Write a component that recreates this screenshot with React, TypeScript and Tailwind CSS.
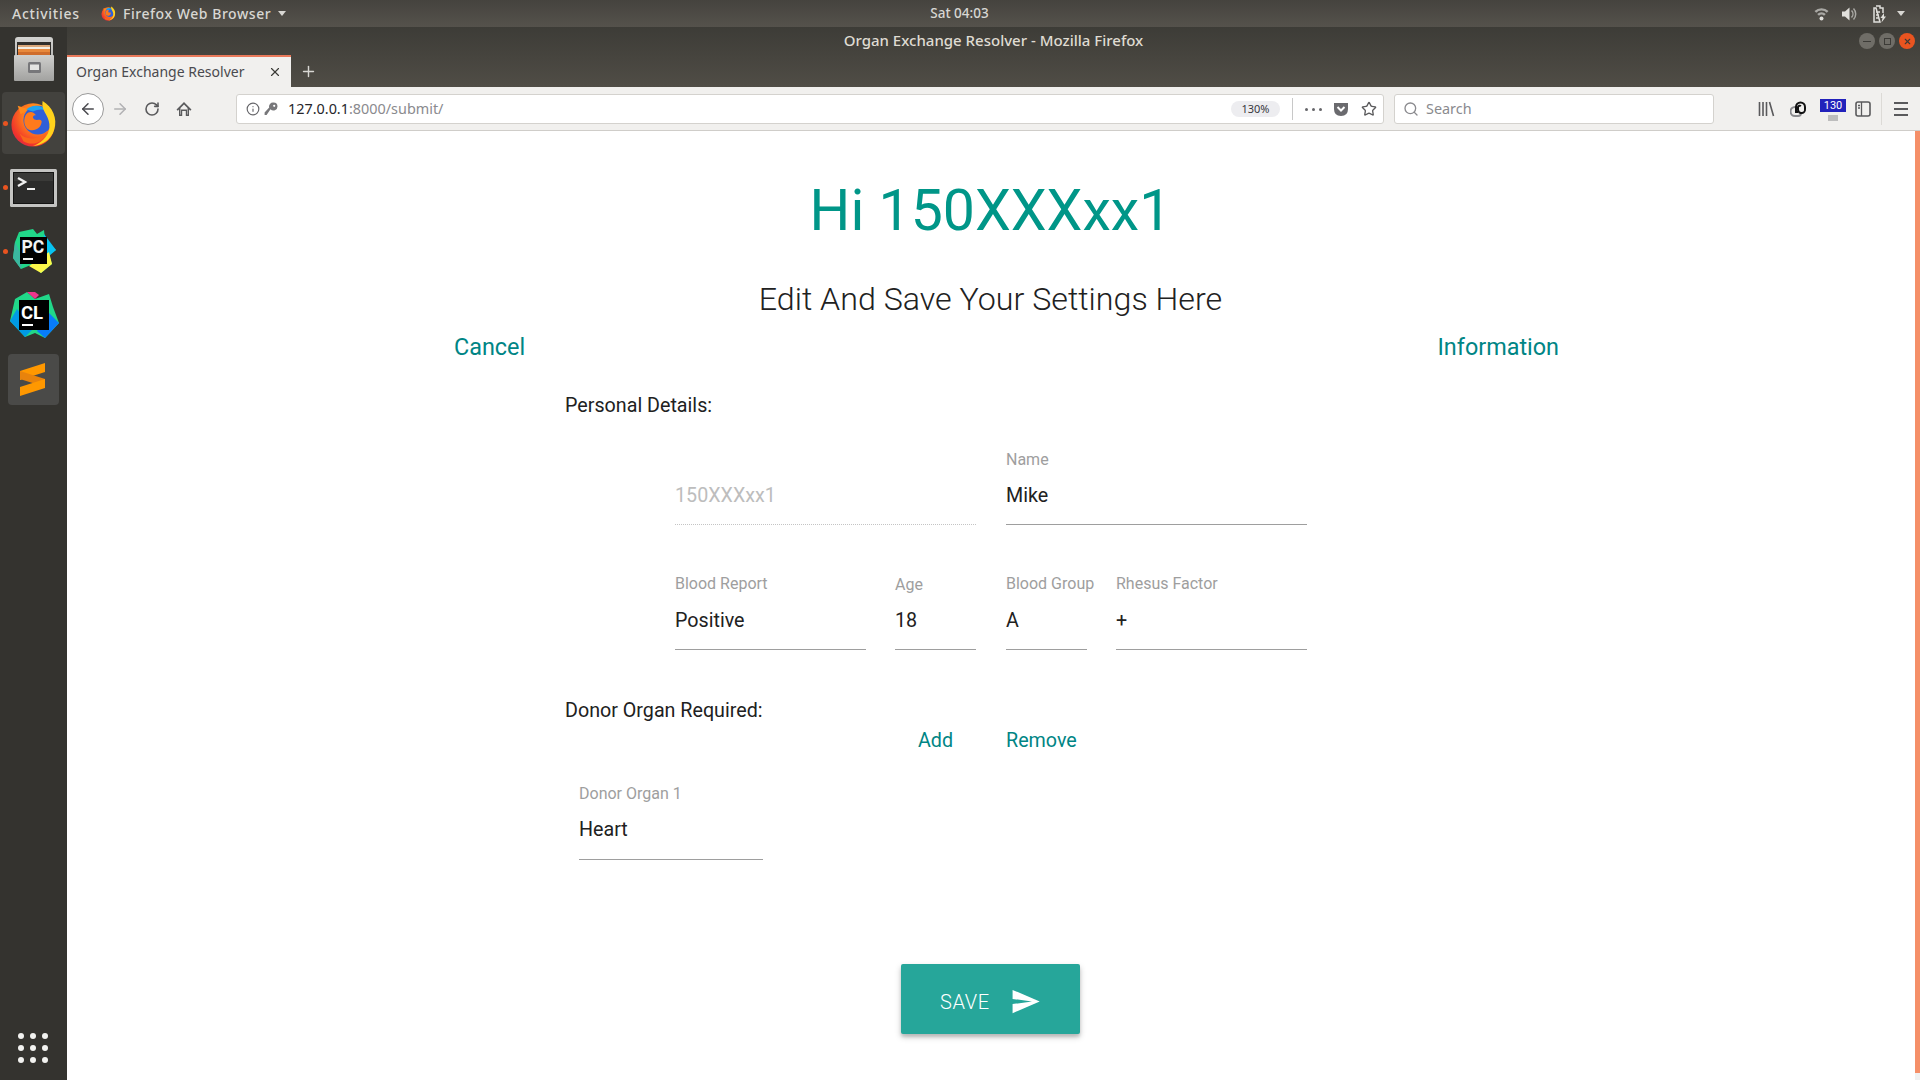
import React from "react";
import { ArrowLeft, ArrowRight, RotateCw, Info, Star, Search, X, Plus } from "lucide-react";

function Firefox({ size }: { size: number }) {
  const id = "ff" + size;
  return (
    <svg width={size} height={size} viewBox="0 0 50 50">
      <defs>
        <radialGradient id={id} cx="0.65" cy="0.3" r="0.85">
          <stop offset="0" stopColor="#ffb81c" />
          <stop offset="0.45" stopColor="#ff7a1c" />
          <stop offset="0.8" stopColor="#f0342c" />
          <stop offset="1" stopColor="#d6205a" />
        </radialGradient>
      </defs>
      <circle cx="24" cy="27" r="22.5" fill={`url(#${id})`} />
      <path d="M8 7 L11 16 L20 11 Z" fill="#ff8a1c" />
      <circle cx="29" cy="22" r="15" fill="#2f5fd8" />
      <path d="M17 11 C25 4 35 7 42 15 C37 10 30 10 24 13 Z" fill="#1fa4f0" />
      <path d="M17 16 C20 12 25 13 27 17 C24 17 23 19 25 21 C29 23 31 20 33 23 C33 31 24 35 18 31 C14 27 14 20 17 16 Z" fill="#ff7a1c" />
      <path d="M34 2 C44 8 50 20 46 32 C43 42 34 48 24 49 C36 44 42 36 41 26 C40 16 32 12 34 2 Z" fill="#ffd21c" />
      <path d="M10 36 C18 44 30 42 38 34 C36 44 24 50 14 44 Z" fill="#f9671c" />
    </svg>
  );
}

function Cabinet() {
  return (
    <svg width="42" height="44" viewBox="0 0 42 44">
      <defs>
        <linearGradient id="cabTop" x1="0" y1="0" x2="0" y2="1">
          <stop offset="0" stopColor="#d2d2d0" />
          <stop offset="1" stopColor="#9a9a98" />
        </linearGradient>
        <linearGradient id="cabFront" x1="0" y1="0" x2="0" y2="1">
          <stop offset="0" stopColor="#cfcfcd" />
          <stop offset="1" stopColor="#a2a2a0" />
        </linearGradient>
      </defs>
      <path d="M2 3 Q2 0 5 0 H37 Q40 0 40 3 V42 Q40 44 38 44 H4 Q2 44 2 42 Z" fill="url(#cabTop)" />
      <rect x="4" y="5" width="34" height="14" fill="#302e2b" />
      <rect x="5" y="8" width="32" height="2" fill="#d9a77a" />
      <rect x="5" y="10" width="32" height="2" fill="#f3ede2" />
      <rect x="5" y="12" width="32" height="3" fill="#e8893c" />
      <rect x="5" y="15" width="32" height="3" fill="#cf6d2c" />
      <rect x="1" y="18" width="40" height="26" rx="1" fill="url(#cabFront)" />
      <rect x="15" y="25" width="13" height="11" rx="1.5" fill="#77777a" />
      <rect x="17" y="27.5" width="9" height="5.5" fill="#e4e4e2" />
    </svg>
  );
}

function Terminal() {
  return (
    <svg className="mt-[2px]" width="47" height="38" viewBox="0 0 47 38">
      <rect x="0" y="0" width="47" height="38" rx="1.5" fill="#c4c4c2" />
      <rect x="3" y="3" width="41" height="32" fill="#141413" />
      <rect x="4" y="4" width="39" height="30" fill="#2c2c2b" />
      <rect x="4" y="4" width="39" height="8" fill="#3a3a38" />
      <path d="M8 9 L15 13 L8 17" fill="none" stroke="#f0f0f0" strokeWidth="2.4" />
      <rect x="17" y="19" width="8" height="2" fill="#f0f0f0" />
    </svg>
  );
}

function PyCharm() {
  return (
    <svg width="46" height="46" viewBox="0 0 46 46">
      <polygon points="8,4 22,1 26,6 33,2 34,12 45,22 38,27 41,36 30,45 20,37 10,41 2,30 4,14" fill="#21d789" />
      <polygon points="33,6 45,22 38,28 32,24" fill="#07c3f2" />
      <polygon points="38,24 41,36 30,45 18,38 30,30" fill="#fcf84a" />
      <polygon points="4,14 12,30 10,41 2,30" fill="#3bb8a0" />
      <rect x="9" y="9" width="27" height="27" fill="#000" />
      <text x="10.5" y="25" fontFamily="Roboto, sans-serif" fontWeight="700" fontSize="17.5" fill="#f2f2f2">PC</text>
      <rect x="12" y="30" width="10" height="2" fill="#f2f2f2" />
    </svg>
  );
}

function CLion() {
  return (
    <svg width="50" height="48" viewBox="0 0 50 48">
      <polygon points="6,8 18,1 26,8 40,3 44,16 50,32 36,47 26,42 16,46 1,30" fill="#21d789" />
      <polygon points="18,1 26,8 30,4 26,1" fill="#ed358c" />
      <polygon points="1,30 16,46 24,38 8,18" fill="#009ae5" />
      <polygon points="40,22 50,32 36,47 28,40" fill="#087cfa" />
      <rect x="10" y="9" width="30" height="30" fill="#000" />
      <text x="12" y="28" fontFamily="Roboto, sans-serif" fontWeight="700" fontSize="18.5" fill="#fff">CL</text>
      <rect x="13" y="33" width="11" height="2" fill="#fff" />
    </svg>
  );
}

function Sublime() {
  return (
    <svg width="51" height="51" viewBox="0 0 51 51">
      <rect width="51" height="51" rx="4" fill="#4a4a48" />
      <polygon points="12,17 37,9 37,18 12,26" fill="#ff9800" />
      <polygon points="12,25 37,33 37,25 12,17" fill="#e8830c" />
      <polygon points="12,33 37,25 37,34 12,42" fill="#ff9800" />
    </svg>
  );
}

function Dock({ children, dot, tile }: { children: React.ReactNode; dot?: boolean; tile?: boolean }) {
  return (
    <div className="relative flex h-[64px] w-full items-center justify-center">
      {tile && <div className="absolute left-[2px] top-[1px] h-[62px] w-[63px] rounded-[4px] bg-[#43423e]" />}
      {dot && <div className="absolute left-[3px] top-[30px] h-[5px] w-[5px] rounded-full bg-[#e95420]" />}
      <div className="relative flex">{children}</div>
    </div>
  );
}

function Field({ label, value, width, muted, size, labelClass }: { label?: string; value: string; width: string; muted?: boolean; size: string; labelClass?: string }) {
  return (
    <div className={width}>
      <div className={`h-[20px] whitespace-nowrap text-[16px] leading-[20px] text-[#9e9e9e] ${labelClass ?? ""}`}>{label}</div>
      <div
        className={`flex items-center border-b text-[19.7px] ${size} ${
          muted ? "border-dotted border-[#c4c4c4] text-[#bdbdbd]" : "border-[#9e9e9e] text-[#212121]"
        }`}
      >
        {value}
      </div>
    </div>
  );
}

export default function App() {
  return (
    <div className="flex h-[1080px] w-[1920px] flex-col overflow-hidden bg-white font-['Roboto',sans-serif]">
      {/* GNOME top bar */}
      <div className="grid h-[27px] shrink-0 grid-cols-3 items-center bg-gradient-to-b from-[#45433e] to-[#55524c] font-['Noto_Sans',sans-serif] text-[14px] font-medium text-[#d8d7d3]">
        <div className="flex items-center pl-[12px] tracking-[0.55px]">
          <span className="w-[89px] tracking-[0.75px]">Activities</span>
          <Firefox size={15} />
          <span className="ml-[7px]">Firefox Web Browser</span>
          <span className="ml-[7px] h-0 w-0 border-x-[4px] border-t-[5px] border-x-transparent border-t-[#d8d7d3]" />
        </div>
        <div className="pr-[1px] text-center text-[13.5px]">Sat 04:03</div>
        <div className="flex items-center justify-end pr-[15px]">
          <svg width="15" height="15" viewBox="0 0 15 15">
            <path d="M0.5 5 A10 10 0 0 1 14.5 5 L12.8 6.8 A7.5 7.5 0 0 0 2.2 6.8 Z" fill="#a9a8a4" />
            <path d="M3.2 8 A6 6 0 0 1 11.8 8 L10 9.8 A3.5 3.5 0 0 0 5 9.8 Z" fill="#a9a8a4" />
            <circle cx="7.5" cy="12.5" r="2" fill="#e0dfdb" />
          </svg>
          <svg className="ml-[12px]" width="16" height="16" viewBox="0 0 16 16">
            <path d="M1 5.5 H4 L8.5 1.5 V14.5 L4 10.5 H1 Z" fill="#e0dfdb" />
            <path d="M10.5 4.5 A5 5 0 0 1 10.5 11.5 M12.5 2.5 A8 8 0 0 1 12.5 13.5" fill="none" stroke="#a9a8a4" strokeWidth="1.5" />
          </svg>
          <svg className="ml-[15px]" width="15" height="18" viewBox="0 0 15 18">
            <path d="M4 1 H8 V3 H11 V8 M8 17 H2 V3 H4 Z M4 7 H8 M4 10 H7 M4 13 H7" fill="none" stroke="#e0dfdb" strokeWidth="1.5" />
            <path d="M12 8 L8.5 13 H10.5 L9.5 17.5 L14 11.5 H12 Z" fill="#e0dfdb" />
          </svg>
          <span className="ml-[10px] h-0 w-0 border-x-[4px] border-t-[5px] border-x-transparent border-t-[#d8d7d3]" />
        </div>
      </div>

      <div className="flex min-h-0 flex-1">
        {/* Dock */}
        <div className="flex w-[67px] shrink-0 flex-col items-center bg-[#34332f] pb-[17px]">
          <Dock><Cabinet /></Dock>
          <Dock tile dot><Firefox size={48} /></Dock>
          <Dock dot><Terminal /></Dock>
          <Dock dot><PyCharm /></Dock>
          <Dock><CLion /></Dock>
          <Dock><Sublime /></Dock>
          <div className="mr-[1px] mt-auto grid grid-cols-3 gap-[6px]">
            {Array.from({ length: 9 }).map((_, i) => (
              <div key={i} className="h-[6px] w-[6px] rounded-full bg-[#f2f2f0]" />
            ))}
          </div>
        </div>

        <div className="flex min-w-0 flex-1 flex-col">
          {/* Title bar with tab strip */}
          <div className="relative h-[60px] shrink-0 bg-gradient-to-b from-[#3d3c37] to-[#504d46]">
            <div className="flex h-[27px] items-center justify-center font-['Noto_Sans',sans-serif] text-[15px] font-medium text-[#dfdbd2]">
              Organ Exchange Resolver - Mozilla Firefox
            </div>
            <div className="absolute right-[5px] top-[6px] flex gap-[4px]">
              <div className="flex h-[16px] w-[16px] items-center justify-center rounded-full bg-[#6f6d67]"><div className="h-[1px] w-[8px] bg-[#3c3b37]" /></div>
              <div className="flex h-[16px] w-[16px] items-center justify-center rounded-full bg-[#6f6d67]"><div className="h-[7px] w-[7px] border border-[#3c3b37]" /></div>
              <div className="flex h-[16px] w-[16px] items-center justify-center rounded-full bg-[#e95420]"><X size={9} strokeWidth={3} className="text-[#3c3b37]" /></div>
            </div>
            <div className="absolute bottom-0 left-0 flex h-[32px] items-stretch">
              <div className="flex w-[224px] items-center border-t-2 border-[#e9795a] bg-[#f1f0ee] pb-[1px] pl-[9px] font-['Noto_Sans',sans-serif] text-[14px] text-[#4a4a4f]">
                <span className="w-[192px]">Organ Exchange Resolver</span>
                <X size={14} strokeWidth={2} className="text-[#3c3b37]" />
              </div>
              <div className="flex w-[34px] items-center justify-center">
                <Plus size={17} strokeWidth={2} className="text-[#d8d7d3]" />
              </div>
            </div>
          </div>

          {/* Toolbar */}
          <div className="flex h-[44px] shrink-0 items-center border-b border-[#cfcdc9] bg-[#f1f0ee] pt-[1px] text-[#5a5a5c]">
            <div className="ml-[5px] flex h-[32px] w-[32px] items-center justify-center rounded-full border border-[#9a9a9a] bg-white">
              <ArrowLeft size={18} strokeWidth={2} className="text-[#4a4a4f]" />
            </div>
            <div className="flex w-[32px] justify-center"><ArrowRight size={18} strokeWidth={2} className="text-[#b1b1b3]" /></div>
            <div className="flex w-[32px] justify-center"><RotateCw size={16} strokeWidth={2.4} /></div>
            <div className="flex w-[32px] justify-center">
              <svg width="16" height="16" viewBox="0 0 16 16">
                <path d="M8 1 L15.5 8.5 L14.2 9.8 L13 8.6 V15 H9.8 V10 H6.2 V15 H3 V8.6 L1.8 9.8 L0.5 8.5 Z" fill="#5a5a5c" />
                <path d="M8 3.6 L11.5 7.1 V13.6 H11 V8.6 H5 V13.6 H4.5 V7.1 Z" fill="#f1f0ee" />
              </svg>
            </div>
            <div className="ml-[36px] flex h-[30px] w-[1148px] items-center rounded-[3px] border border-[#d4d2ce] bg-white pl-[9px] pr-[6px] font-['Noto_Sans',sans-serif] text-[14.4px]">
              <Info size={14} strokeWidth={2} className="text-[#66666a]" />
              <svg className="ml-[4px]" width="14" height="14" viewBox="0 0 14 14">
                <path d="M13.5 4.5 A4 4 0 0 1 6.5 7.2 L2.6 13 H0.6 V10.6 L5.2 5.6 A4 4 0 0 1 9.5 0.5 A4 4 0 0 1 13.5 4.5 Z" fill="#77777a" />
                <circle cx="10.2" cy="3.8" r="1.1" fill="#ffffff" />
              </svg>
              <span className="ml-[10px] text-[#26262a]">127.0.0.1</span>
              <span className="text-[#8a8a8e]">:8000/submit/</span>
              <div className="ml-auto flex h-[16px] w-[49px] items-center justify-center rounded-full bg-[#ededf0] text-[11px] text-[#38383d]">130%</div>
              <div className="ml-[12px] h-[22px] w-px bg-[#c8c8c8]" />
              <div className="ml-[12px] flex w-[17px] justify-between">
                <span className="h-[3px] w-[3px] rounded-full bg-[#66666a]" />
                <span className="h-[3px] w-[3px] rounded-full bg-[#66666a]" />
                <span className="h-[3px] w-[3px] rounded-full bg-[#66666a]" />
              </div>
              <svg className="ml-[11px]" width="16" height="16" viewBox="0 0 16 16">
                <path d="M1 2 H15 V8 Q15 15 8 15 Q1 15 1 8 Z" fill="#6a6a6e" />
                <path d="M4.5 6 L8 9.5 L11.5 6" fill="none" stroke="#fff" strokeWidth="2" />
              </svg>
              <Star size={16} strokeWidth={2} className="ml-[12px]" />
            </div>
            <div className="ml-[10px] flex h-[30px] w-[320px] items-center rounded-[3px] border border-[#d4d2ce] bg-white pl-[8px] font-['Noto_Sans',sans-serif] text-[14.4px] text-[#8a8a8e]">
              <Search size={16} strokeWidth={2} className="text-[#8a8a8e]" />
              <span className="ml-[7px]">Search</span>
            </div>
            <svg className="ml-[44px]" width="17" height="16" viewBox="0 0 17 16">
              <path d="M1.5 1 V15 M5 1 V15 M8.5 1 V15 M11.5 1 L15.5 15" fill="none" stroke="#5a5a5c" strokeWidth="1.6" />
            </svg>
            <svg className="ml-[15px]" width="17" height="18" viewBox="0 0 17 18">
              <path d="M7 7 H5 A4.5 4.5 0 0 0 5 16 H8 A3 3 0 0 0 11 13" fill="none" stroke="#8a8a8e" strokeWidth="2" />
              <path d="M8 12 H6 V7 A4.5 4.5 0 0 1 15 7 V9 A3.5 3.5 0 0 1 8 10 V7 A2 2 0 0 1 11 6" fill="none" stroke="#111" strokeWidth="2" />
            </svg>
            <div className="ml-[13px] flex w-[26px] flex-col items-center pt-[1px]">
              <div className="flex h-[13px] w-[26px] items-center justify-center bg-[#2222bb] text-[11px] leading-none text-white">130</div>
              <div className="mt-[3px] h-[6px] w-[10px] bg-[#bdbdbd]" />
            </div>
            <svg className="ml-[9px]" width="16" height="16" viewBox="0 0 16 16">
              <rect x="1" y="1" width="14" height="14" rx="2" fill="none" stroke="#5a5a5c" strokeWidth="1.6" />
              <path d="M6.5 1 V15 M3 4.5 H5 M3 7 H5" stroke="#5a5a5c" strokeWidth="1.3" />
            </svg>
            <div className="ml-[10px] h-[32px] w-px bg-[#dcdad6]" />
            <div className="ml-[12px] flex w-[14px] flex-col gap-[4px]">
              <div className="h-[2px] bg-[#5a5a5c]" />
              <div className="h-[2px] bg-[#5a5a5c]" />
              <div className="h-[2px] bg-[#5a5a5c]" />
            </div>
          </div>

          {/* Page */}
          <div className="flex min-h-0 flex-1">
            <div className="min-w-0 flex-1 pr-[1px] pt-[40px]">
              <h1 className="h-[76px] text-center text-[57.2px] leading-[79px] font-normal text-[#009688]">Hi 150XXXxx1</h1>
              <h2 className="mt-[31px] h-[42px] text-center text-[32.2px] leading-[42px] font-light text-[#212121]">Edit And Save Your Settings Here</h2>
              <div className="ml-[387px] mt-[11px] flex h-[32px] w-[1105px] justify-between text-[23.4px] leading-[32px] text-[#008585]">
                <span>Cancel</span>
                <span>Information</span>
              </div>
              <div className="ml-[498px] mt-[29px] w-[742px]">
                <div className="h-[28px] text-[19.7px] leading-[28px] text-[#212121]">Personal Details:</div>
                <div className="mt-[30px] flex gap-[30px] pl-[110px]">
                  <Field value="150XXXxx1" width="w-[301px]" muted size="h-[55px] pb-[3px]" />
                  <Field label="Name" value="Mike" width="w-[301px]" size="h-[55px] pb-[3px]" />
                </div>
                <div className="mt-[49px] flex pl-[110px]">
                  <Field label="Blood Report" value="Positive" width="w-[191px]" size="h-[56px] pb-[2px]" />
                  <Field label="Age" value="18" width="ml-[29px] w-[81px]" labelClass="pt-px" size="h-[56px] pb-[2px]" />
                  <Field label="Blood Group" value="A" width="ml-[30px] w-[81px]" size="h-[56px] pb-[2px]" />
                  <Field label="Rhesus Factor" value="+" width="ml-[29px] w-[191px]" size="h-[56px] pb-[2px]" />
                </div>
                <div className="mt-[47px] h-[28px] text-[19.7px] leading-[28px] text-[#212121]">Donor Organ Required:</div>
                <div className="mt-[2px] flex h-[28px] pl-[330px] text-[19.7px] leading-[28px] text-[#008585]">
                  <span className="w-[81px] text-center">Add</span>
                  <span className="ml-[30px]">Remove</span>
                </div>
                <div className="ml-[14px] mt-[29px]">
                  <Field label="Donor Organ 1" value="Heart" width="w-[184px]" size="h-[56px] pb-[4px]" />
                </div>
              </div>
              <div className="mt-[104px] flex justify-center">
                <button className="flex h-[70px] w-[179px] items-center rounded-[2px] bg-[#26a69a] pl-[39px] pt-[5px] text-[20px] font-light tracking-[0.6px] text-white shadow-[0_3px_6px_rgba(0,0,0,0.22),0_3px_3px_rgba(0,0,0,0.12)]">
                  <span>SAVE</span>
                  <svg className="ml-[20px]" width="31" height="31" viewBox="0 0 24 24" fill="#fff">
                    <path d="M2.01 21L23 12 2.01 3 2 10l15 2-15 2z" />
                  </svg>
                </button>
              </div>
            </div>
            <div className="flex w-[5px] shrink-0 flex-col">
              <div className="flex-1 bg-[#f58f68]" />
              <div className="h-[7px] bg-[#f0f0f0]" />
            </div>
          </div>
        </div>
      </div>
    </div>
  );
}
